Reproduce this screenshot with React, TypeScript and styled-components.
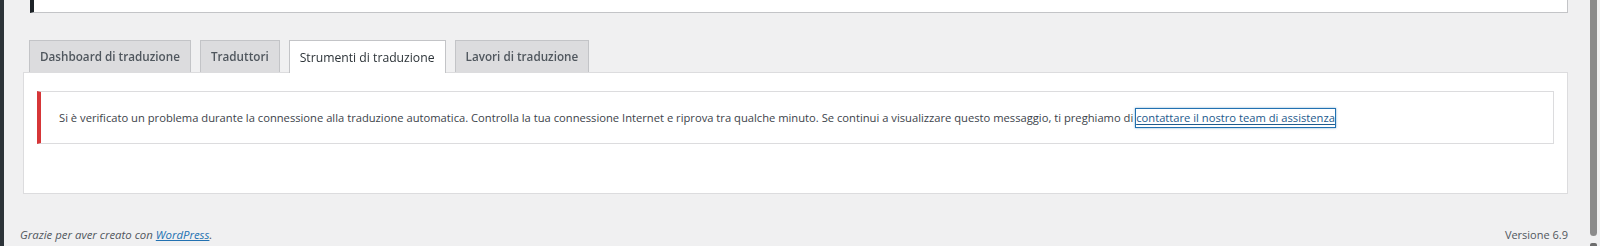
import React from "react";
import styled, { createGlobalStyle } from "styled-components";

/** Pagina strumenti di traduzione (admin) */

const Global = createGlobalStyle`
  html, body {
    margin: 0;
    height: 246px;
    overflow: hidden;
    background: #f0f0f1;
  }
  body {
    font-family: "Open Sans", "Noto Sans", sans-serif;
    color: #3c434a;
  }
`;

const Page = styled.div`
  display: flex;
  min-height: 246px;
`;

const MenuEdge = styled.div`
  width: 4px;
  flex: none;
  background: #2c3338;
`;

const Content = styled.div`
  flex: 1;
  display: flex;
  flex-direction: column;
`;

const TopNotice = styled.div`
  height: 12px;
  margin: 0 32px 0 26px;
  background: #fff;
  border: 1px solid #c3c4c7;
  border-top: none;
  border-left: 4px solid #1d2327;
`;

const TabBar = styled.div`
  display: flex;
  gap: 9px;
  margin-top: 27px;
  padding-left: 25px;
  position: relative;
  z-index: 1;
`;

const Tab = styled.a<{ $active?: boolean }>`
  display: block;
  box-sizing: border-box;
  height: ${(p) => (p.$active ? "33px" : "32px")};
  margin-bottom: ${(p) => (p.$active ? "-1px" : "0")};
  padding: ${(p) => (p.$active ? "9px 10px 0" : "7px 10px 0")};
  border: 1px solid #c3c4c7;
  border-bottom: none;
  background: ${(p) => (p.$active ? "#fff" : "#dcdcde")};
  color: ${(p) => (p.$active ? "#2c3338" : "#50575e")};
  font-size: ${(p) => (p.$active ? "12.2px" : "11.7px")};
  font-weight: ${(p) => (p.$active ? 400 : 600)};
  line-height: 16px;
  white-space: nowrap;
  text-decoration: none;
  cursor: pointer;
`;

const Panel = styled.div`
  box-sizing: border-box;
  height: 122px;
  margin: 0 32px 0 19px;
  padding: 18px 13px;
  background: #fff;
  border: 1px solid #dcdcde;
`;

const ErrorNotice = styled.div`
  box-sizing: border-box;
  height: 53px;
  display: flex;
  align-items: center;
  padding: 0 18px;
  background: #fff;
  border: 1px solid #dcdcde;
  border-left: 4px solid #d63638;
  font-size: 11.2px;
  line-height: 16px;
  white-space: nowrap;
`;

const SupportLink = styled.a`
  color: #1d5a8c;
  text-decoration: underline;
  text-underline-offset: 2px;
  box-shadow: 0 0 0 1px #2271b1, 0 0 2px 1px rgba(34, 113, 177, 0.6);
  padding: 1px 0;
`;

const Footer = styled.div`
  display: flex;
  justify-content: space-between;
  align-items: center;
  margin-top: 33px;
  padding: 0 32px 0 16px;
  line-height: 16px;
  color: #50575e;
`;

const Thanks = styled.span`
  font-size: 11.4px;
  font-style: italic;
`;

const FooterLink = styled.a`
  color: #2271b1;
  text-decoration: underline;
`;

const Version = styled.span`
  font-size: 11px;
`;

const ScrollThumb = styled.div`
  position: fixed;
  top: -4px;
  right: 3px;
  width: 7px;
  height: 240px;
  border-radius: 4px;
  background: #8b8b8b;
`;

const ScrollArrow = styled.div`
  position: fixed;
  bottom: 0;
  right: 3px;
  width: 7px;
  height: 3px;
  background: #6d6d6d;
  border-radius: 2px 2px 0 0;
`;

const tabs = [
  { id: "dashboard", label: "Dashboard di traduzione" },
  { id: "translators", label: "Traduttori" },
  { id: "tools", label: "Strumenti di traduzione" },
  { id: "jobs", label: "Lavori di traduzione" },
];

export default function App() {
  const activeTab = "tools";

  return (
    <>
      <Global />
      <Page>
        <MenuEdge />
        <Content>
          <TopNotice />
          <TabBar>
            {tabs.map((t) => (
              <Tab key={t.id} $active={t.id === activeTab}>
                {t.label}
              </Tab>
            ))}
          </TabBar>
          <Panel>
            <ErrorNotice>
              Si è verificato un problema durante la connessione alla traduzione
              automatica. Controlla la tua connessione Internet e riprova tra
              qualche minuto. Se continui a visualizzare questo messaggio, ti
              preghiamo di&nbsp;
              <SupportLink href="#">contattare il nostro team di assistenza</SupportLink>
            </ErrorNotice>
          </Panel>
          <Footer>
            <Thanks>
              Grazie per aver creato con <FooterLink href="#">WordPress</FooterLink>.
            </Thanks>
            <Version>Versione 6.9</Version>
          </Footer>
        </Content>
      </Page>
      <ScrollThumb />
      <ScrollArrow />
    </>
  );
}
